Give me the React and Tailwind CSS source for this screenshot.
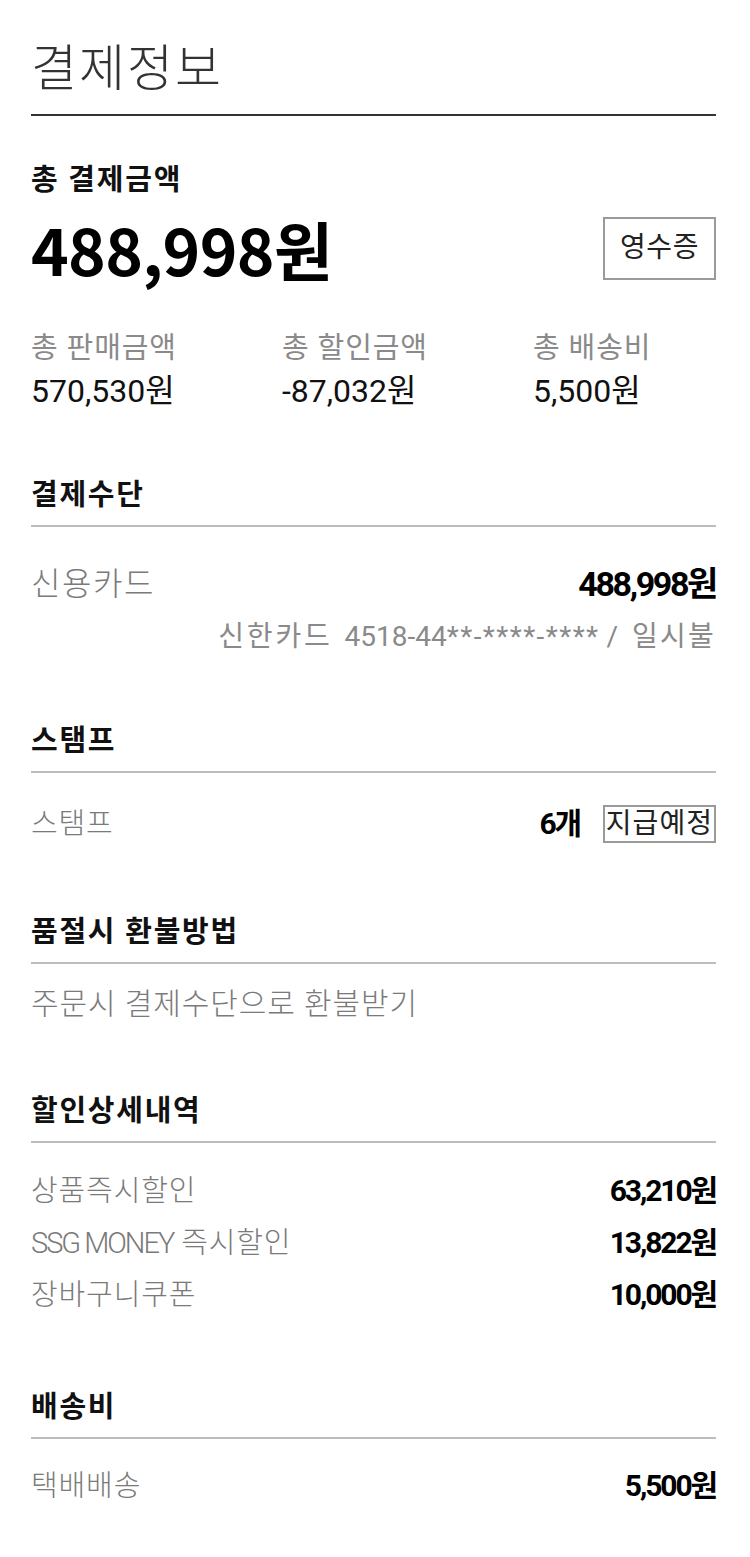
const font = { fontFamily: "Roboto, 'Noto Sans CJK KR', sans-serif" };

function SectionTitle({ children, className = "" }) {
  return (
    <div className={className}>
      <h3 className="text-[29px] font-bold leading-none tracking-[0.06em] text-[#111] pb-[15px]">{children}</h3>
      <div className="h-[2px] bg-[#bdbdbd]" />
    </div>
  );
}

function Amount({ children, className = "text-[30px]" }) {
  return <span className={"font-bold leading-none text-black tracking-[-0.07em] " + className}>{children}</span>;
}

function Row({ label, value, className = "" }) {
  return (
    <div className={"flex items-center justify-between " + className}>
      <span className="text-[29px] font-light leading-none tracking-[0.03em] text-[#7a7a7a]">{label}</span>
      <Amount>{value}</Amount>
    </div>
  );
}

export default function App() {
  const summary = [
    { label: "총 판매금액", value: "570,530원" },
    { label: "총 할인금액", value: "-87,032원" },
    { label: "총 배송비", value: "5,500원" },
  ];

  const discounts = [
    { label: "상품즉시할인", value: "63,210원" },
    { label: <><span className="tracking-[-0.07em]">SSG MONEY</span> 즉시할인</>, value: "13,822원" },
    { label: "장바구니쿠폰", value: "10,000원" },
  ];

  return (
    <div className="w-[750px] min-h-[1557px] bg-white pl-[31px] pr-[34px]" style={font}>
      {/* header */}
      <h1 className="pt-[44px] pb-[20px] text-[50px] font-light leading-none tracking-[0.04em] text-[#333] border-b-2 border-[#333]">
        결제정보
      </h1>

      {/* total */}
      <div className="mt-[50px]">
        <h2 className="text-[29px] font-bold leading-none tracking-[0.06em] text-[#111]">총 결제금액</h2>
        <div className="mt-[21px] flex items-center justify-between">
          <span
            className="text-[64px] font-bold leading-none text-black tracking-[-0.01em]"
            style={{ fontFamily: "'Noto Sans CJK KR', sans-serif" }}
          >
            488,998원
          </span>
          <button className="w-[113px] h-[63px] border-2 border-[#9a9a9a] text-[28px] leading-none tracking-[0.02em] text-[#222]">
            영수증
          </button>
        </div>
        <div className="mt-[54px] flex">
          {summary.map((s) => (
            <div key={s.label} className="w-[251px] shrink-0">
              <div className="text-[29px] leading-none tracking-[0.03em] text-[#8a8a8a]">{s.label}</div>
              <div className="mt-[12px] text-[32px] leading-none text-[#111]">{s.value}</div>
            </div>
          ))}
        </div>
      </div>

      {/* payment method */}
      <SectionTitle className="mt-[74px]">결제수단</SectionTitle>
      <div className="mt-[40px] flex items-center justify-between">
        <span className="text-[32px] font-light leading-none tracking-[0.05em] text-[#7a7a7a]">신용카드</span>
        <Amount className="text-[34px]">488,998원</Amount>
      </div>
      <div className="mt-[22px] flex justify-end text-[28px] leading-none text-[#8a8a8a] whitespace-pre">
        <span className="tracking-[0.1em]">신한카드</span>
        <span className="ml-[12px]">4518-44</span>
        <span className="tracking-[0.05em]">**-****-****</span>
        <span>{" /  "}</span>
        <span className="tracking-[0.08em]">일시불</span>
      </div>

      {/* stamp */}
      <SectionTitle className="mt-[76px]">스탬프</SectionTitle>
      <div className="mt-[32px] flex items-center justify-between">
        <span className="text-[29px] font-light leading-none tracking-[0.03em] text-[#7a7a7a]">스탬프</span>
        <div className="flex items-center gap-[23px]">
          <Amount>6개</Amount>
          <span className="w-[113px] h-[38px] flex items-center justify-center border-2 border-[#9a9a9a] text-[28px] leading-none tracking-[0.04em] text-[#222]">
            지급예정
          </span>
        </div>
      </div>

      {/* refund */}
      <SectionTitle className="mt-[75px]">품절시 환불방법</SectionTitle>
      <div className="mt-[25px] text-[30px] font-light leading-none tracking-[0.03em] text-[#7a7a7a]">
        주문시 결제수단으로 환불받기
      </div>

      {/* discounts */}
      <SectionTitle className="mt-[78px]">할인상세내역</SectionTitle>
      <div className="mt-[33px] flex flex-col gap-[22px]">
        {discounts.map((d) => (
          <Row key={d.value} label={d.label} value={d.value} />
        ))}
      </div>

      {/* shipping */}
      <SectionTitle className="mt-[83px]">배송비</SectionTitle>
      <Row label="택배배송" value="5,500원" className="mt-[32px]" />
    </div>
  );
}
